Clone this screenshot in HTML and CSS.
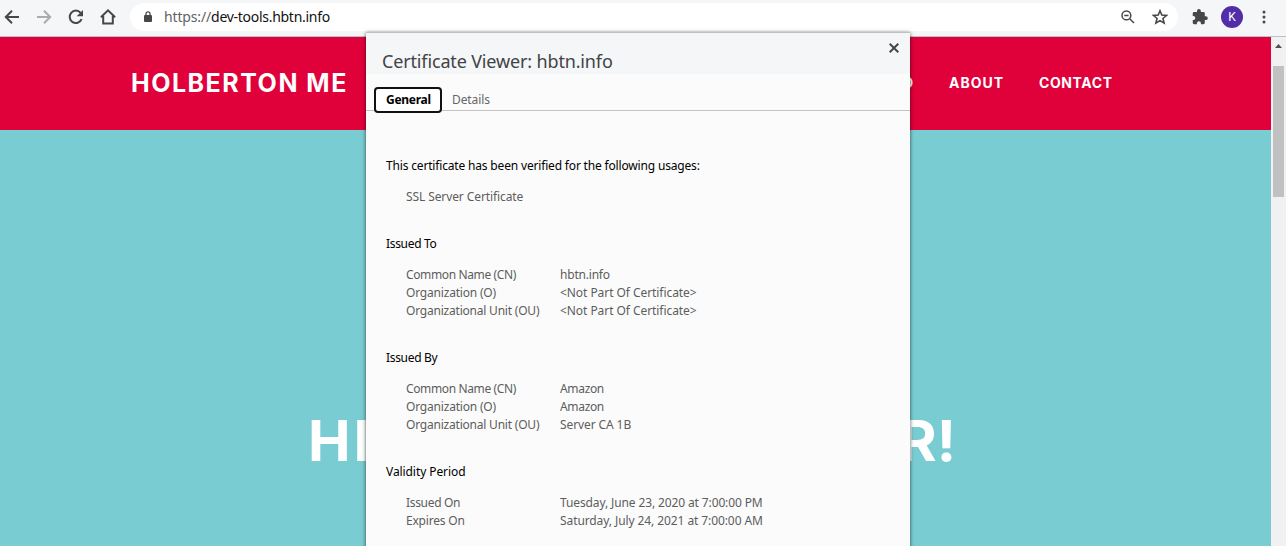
FILE: index.html
```html
<!DOCTYPE html>
<html lang="en">
<head>
<meta charset="utf-8">
<title>Certificate Viewer</title>
<link rel="stylesheet" href="styles.css">
</head>
<body>
<div class="window">
  <div class="toolbar">
    <svg class="icon back" viewBox="0 0 16 16"><path d="M15 8H2M8 1.8L1.8 8L8 14.2"/></svg>
    <svg class="icon forward" viewBox="0 0 16 16"><path d="M1 8H14M8 1.8L14.2 8L8 14.2"/></svg>
    <svg class="icon reload" viewBox="0 0 16 16"><path d="M13.6 10.2A6.2 6.2 0 1 1 12.6 3.8"/><path class="solid" d="M15 1V7.3H8.7Z"/></svg>
    <svg class="icon home" viewBox="0 0 16 16"><path d="M.9 8.3L8 1.4L15.1 8.3M3.2 7V14.6H12.8V7"/></svg>
    <div class="omnibox">
      <svg class="lock" viewBox="0 0 8 11"><rect x="0" y="4" width="8" height="7" rx="1"/><path d="M2 4.5V2.8a2 2 0 0 1 4 0V4.5"/></svg>
      <div class="url"><span class="scheme">https://</span><span class="host">dev-tools.hbtn.info</span></div>
      <svg class="zoom" viewBox="0 0 14 14"><circle cx="5.4" cy="5.4" r="4.4"/><path d="M8.7 8.7L13 13M3.2 5.4H7.6"/></svg>
      <svg class="star" viewBox="0 0 14 14"><path d="M7 1.5L8.6 5.2L12.8 5.6L9.6 8.3L10.6 12.4L7 10.2L3.4 12.4L4.4 8.3L1.2 5.6L5.4 5.2Z"/></svg>
    </div>
    <svg class="puzzle" viewBox="0 0 15 15"><path d="M13 6.8H12V4A1.4 1.4 0 0 0 10.600 2.700H8.300V1.800A1.800 1.800 0 0 0 4.700 1.800V2.700H2A1.300 1.300 0 0 0 .7 4V6.500H1.600A2 2 0 0 1 1.600 10.400H.7V13A1.300 1.300 0 0 0 2 14.400H4.600V13.500A1.900 1.900 0 0 1 8.400 13.500V14.400H10.700A1.400 1.400 0 0 0 12 13V10.400H13A1.800 1.800 0 0 0 13 6.800Z"/></svg>
    <div class="avatar">K</div>
    <svg class="dots" viewBox="0 0 4 14"><circle cx="2" cy="2" r="1.5"/><circle cx="2" cy="7" r="1.5"/><circle cx="2" cy="12" r="1.5"/></svg>
  </div>
  <div class="viewport">
    <div class="site">
      <div class="site-header">
        <div class="brand">HOLBERTON ME</div>
        <div class="nav"><span class="nav-d">D</span><span class="nav-about">ABOUT</span><span class="nav-contact">CONTACT</span></div>
      </div>
      <div class="hero"><span class="hero-start">HI</span><span class="hero-end">R!</span></div>
    </div>
    <div class="scrollbar"><svg class="arrow" viewBox="0 0 7 4"><path d="M0 4L3.500 0L7 4Z"/></svg><div class="thumb"></div></div>
  </div>
  <div class="dialog">
    <div class="dialog-head">
      <div class="title">Certificate Viewer: hbtn.info</div>
      <svg class="close" viewBox="0 0 10 10"><path d="M.7 .7L9.300 9.300M9.300 .7L.7 9.300"/></svg>
    </div>
    <div class="tabs"><div class="tab active">General</div><div class="tab details">Details</div></div>
    <div class="body">
      <div class="heading verified">This certificate has been verified for the following usages:</div>
      <div class="rows"><div class="row"><span class="ssl">SSL Server Certificate</span></div></div>
      <div class="heading issue">Issued To</div>
      <div class="rows">
        <div class="row"><span class="cn">Common Name (CN)</span><span class="info">hbtn.info</span></div>
        <div class="row"><span class="org">Organization (O)</span><span class="none">&lt;Not Part Of Certificate&gt;</span></div>
        <div class="row"><span class="unit">Organizational Unit (OU)</span><span class="none">&lt;Not Part Of Certificate&gt;</span></div>
      </div>
      <div class="heading issue">Issued By</div>
      <div class="rows">
        <div class="row"><span class="cn">Common Name (CN)</span><span class="amazon">Amazon</span></div>
        <div class="row"><span class="org">Organization (O)</span><span class="amazon">Amazon</span></div>
        <div class="row"><span class="unit">Organizational Unit (OU)</span><span class="server">Server CA 1B</span></div>
      </div>
      <div class="heading period">Validity Period</div>
      <div class="rows">
        <div class="row"><span class="issued">Issued On</span><span class="date-from">Tuesday, June 23, 2020 at 7:00:00 PM</span></div>
        <div class="row"><span class="expires">Expires On</span><span class="date-to">Saturday, July 24, 2021 at 7:00:00 AM</span></div>
      </div>
    </div>
  </div>
</div>
</body>
</html>
```

FILE: styles.css
```css
* { box-sizing: border-box; }
body { margin: 0; overflow: hidden; font-family: "Noto Sans", sans-serif; }
.window { position: relative; width: 1286px; height: 546px; display: flex; flex-direction: column; overflow: hidden; white-space: nowrap; }
svg { display: block; flex: none; fill: none; stroke: #454749; }

.toolbar { height: 37px; flex: none; display: flex; align-items: center; padding: 0 0 3px 4px; background: #f4f6f8; border-bottom: 1px solid #b7c2cb; }
.icon { width: 16px; height: 16px; margin-right: 16px; stroke-width: 2; }
.forward { stroke: #a9abad; }
.solid { fill: #454749; stroke: none; }
.home { margin-right: 14px; }
.omnibox { width: 1048px; height: 28px; display: flex; align-items: center; padding-left: 14px; background: #fff; border-radius: 14px; }
.lock { width: 8px; height: 11px; }
.lock rect { fill: #454749; stroke: none; }
.lock path { stroke-width: 1.3; }
.url { width: 957px; margin-left: 12px; font-size: 14px; line-height: 20px; }
.scheme { color: #5f6368; letter-spacing: -.15px; }
.host { color: #111; letter-spacing: -.28px; }
.zoom { width: 14px; height: 14px; stroke-width: 1.5; }
.star { width: 16px; height: 16px; margin-left: 17px; stroke-width: 1.4; }
.puzzle { width: 16px; height: 16px; margin-left: 14px; fill: #454749; stroke: none; }
.avatar { width: 22px; height: 22px; margin-left: 13px; border-radius: 50%; background: #512da8; color: #fff; font: 12px/22px Roboto, sans-serif; text-align: center; }
.dots { width: 4px; height: 14px; margin-left: 19px; fill: #454749; stroke: none; }

.viewport { flex: 1; display: flex; }
.site { width: 1271px; display: flex; flex-direction: column; color: #fff; font-family: Inter, sans-serif; font-weight: 700; }
.site-header { height: 93px; display: flex; align-items: center; justify-content: space-between; padding: 0 159px 2px 131px; background: #e0003a; }
.brand { font-size: 25px; letter-spacing: 1.5px; }
.nav { display: flex; font-size: 14px; }
.nav-d { width: 46px; }
.nav-about { width: 90px; letter-spacing: 1px; }
.nav-contact { width: 73px; letter-spacing: .6px; }
.hero { flex: 1; display: flex; justify-content: space-between; padding: 277px 315px 0 308px; background: #79cdd2; font-size: 57px; line-height: 68px; }
.hero-start { letter-spacing: 3px; }
.scrollbar { width: 15px; display: flex; flex-direction: column; align-items: center; padding-top: 7px; background: #f1f1f1; }
.arrow { width: 7px; height: 4px; fill: #505050; stroke: none; }
.thumb { width: 11px; height: 131px; margin-top: 18px; background: #c1c1c1; }

.dialog { position: absolute; left: 366px; top: 32px; width: 544px; height: 530px; border-top: 1px solid #bfc1c2; background: #fbfbfb; box-shadow: 0 1px 4px rgba(0, 0, 0, .65); }
.dialog-head { height: 41px; display: flex; justify-content: space-between; padding: 10px 11px 0 16px; background: #f4f6f8; }
.title { padding-top: 4px; color: #414345; font-size: 18px; line-height: 28px; letter-spacing: -.15px; }
.close { width: 10px; height: 10px; stroke-width: 2; }
.tabs { height: 37px; display: flex; padding: 13px 0 0 8px; border-bottom: 1px solid #c3c3c3; font-size: 12px; }
.tab { height: 26px; line-height: 22px; }
.active { width: 68px; padding-left: 10px; border: 2px solid #111; border-radius: 4px; background: #fff; color: #000; font-weight: 700; letter-spacing: -.28px; }
.details { margin-left: 10px; padding-top: 2px; color: #666; letter-spacing: -.1px; }
.body { padding: 46px 20px 0; font-size: 12px; line-height: 18px; }
.heading { color: #000; }
.rows { margin: 13px 0 29px; padding-left: 20px; color: #5d5d5d; }
.row { display: grid; grid-template-columns: 154px auto; height: 18px; }
.row span { justify-self: start; }

/* Tracking for the certificate fields */
.verified { letter-spacing: -.17px; }
.issue, .issued { letter-spacing: -.32px; }
.period { letter-spacing: -.08px; }
.ssl { letter-spacing: -.1px; }
.cn { letter-spacing: -.37px; }
.org { letter-spacing: -.19px; }
.unit { letter-spacing: -.21px; }
.info { letter-spacing: -.2px; }
.none { letter-spacing: -.06px; }
.amazon { letter-spacing: -.33px; }
.server { letter-spacing: -.1px; }
.expires { letter-spacing: -.2px; }
.date-from { letter-spacing: -.12px; }
.date-to { letter-spacing: -.09px; }
```
